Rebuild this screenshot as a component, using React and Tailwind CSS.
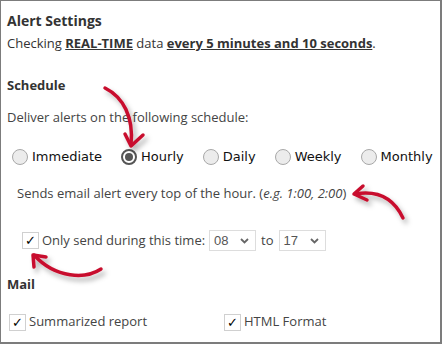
import React from "react";

const sans = { fontFamily: "'Open Sans', sans-serif" };

const Radio = ({ label, checked }) => (
  <label className="flex items-center gap-[4px]">
    {checked ? (
      <span className="w-[16px] h-[16px] rounded-full border-2 border-[#555] bg-white flex items-center justify-center">
        <span className="w-[8px] h-[8px] rounded-full bg-[#555]" />
      </span>
    ) : (
      <span className="w-[16px] h-[16px] rounded-full border border-[#a8a8a8] bg-[#ececec]" />
    )}
    <span className="font-['DejaVu_Sans',sans-serif] text-[13px] text-[#111]">
      {label}
    </span>
  </label>
);

const Check = ({ label }) => (
  <label className="flex items-center gap-[3px]">
    <span className="w-[17px] h-[17px] border border-[#d0d0d0] bg-white flex items-center justify-center text-[13px] leading-none text-black font-['DejaVu_Sans',sans-serif]">
      ✓
    </span>
    <span className="text-[13px] text-[#444]">{label}</span>
  </label>
);

const Select = ({ value }) => (
  <div className="w-[47px] h-[21px] border border-[#ddd] bg-white flex items-center justify-between pl-[4px] pr-[6px] font-['Liberation_Sans',sans-serif] text-[13px] text-[#555]">
    <span>{value}</span>
    <svg width="9" height="6" viewBox="0 0 9 6">
      <path d="M1 1l3.5 3.5L8 1" fill="none" stroke="#666" strokeWidth="1.8" />
    </svg>
  </div>
);

// red hand-drawn pointers over the form
const Arrows = () => (
  <svg
    className="absolute inset-0 pointer-events-none"
    width="442"
    height="344"
    viewBox="0 0 442 344"
  >
    <defs>
      <filter id="sh" x="-20%" y="-20%" width="140%" height="140%">
        <feDropShadow dx="3" dy="4" stdDeviation="2.5" floodColor="#000" floodOpacity="0.3" />
      </filter>
    </defs>
    <g
      fill="none"
      stroke="#c8102e"
      strokeWidth="3.5"
      strokeLinecap="round"
      strokeLinejoin="round"
      filter="url(#sh)"
    >
      <path d="M104 87 C122 96 133 116 130 144" />
      <path d="M124 133 L130 145 L142 134" />
      <path d="M402 217 C393 198 377 189 354 193" />
      <path d="M362 185 L353 193 L366 199" />
      <path d="M100 268 C85 278 55 278 33 254" />
      <path d="M33 266 L32 254 L45 256" />
    </g>
  </svg>
);

export default function App() {
  return (
    <div
      style={sans}
      className="relative w-[442px] h-[344px] border-t border-l border-r-2 border-b-2 border-[#7c7c7c] bg-white overflow-hidden text-[#333]"
    >
      <div className="h-[22px] mt-[8px] pl-[6px] flex items-center text-[14px] font-bold text-[#333]">
        Alert Settings
      </div>
      <div className="h-[22px] mt-[2px] pl-[6px] flex items-center text-[13px] text-[#333] whitespace-pre">
        Checking <b className="underline font-bold">REAL-TIME</b> data{" "}
        <b className="underline font-bold">every 5 minutes and 10 seconds</b>.
      </div>
      <div className="h-[22px] mt-[20px] pl-[6px] flex items-center text-[13px] font-bold">
        Schedule
      </div>
      <div className="h-[22px] mt-[10px] pl-[6px] flex items-center text-[13px] text-[#444]">
        Deliver alerts on the following schedule:
      </div>
      <div className="h-[20px] mt-[18px] pl-[11px] flex items-center gap-[19px]">
        <Radio label="Immediate" />
        <Radio label="Hourly" checked />
        <Radio label="Daily" />
        <Radio label="Weekly" />
        <Radio label="Monthly" />
      </div>
      <div className="h-[22px] mt-[16px] pl-[16px] flex items-center text-[13px] text-[#444]">
        Sends email alert every top of the hour.&nbsp;(<i>e.g. 1:00, 2:00</i>)
      </div>
      <div className="h-[21px] mt-[25px] pl-[21px] flex items-center gap-[4px] text-[13px] text-[#444]">
        <Check label="Only send during this time:" />
        <Select value="08" />
        <span className="px-[1px]">to</span>
        <Select value="17" />
      </div>
      <div className="h-[22px] mt-[23px] pl-[6px] flex items-center text-[13px] font-bold">
        Mail
      </div>
      <div className="h-[22px] mt-[15px] pl-[8px] flex items-center">
        <div className="w-[215px]">
          <Check label="Summarized report" />
        </div>
        <Check label="HTML Format" />
      </div>
      <Arrows />
    </div>
  );
}
